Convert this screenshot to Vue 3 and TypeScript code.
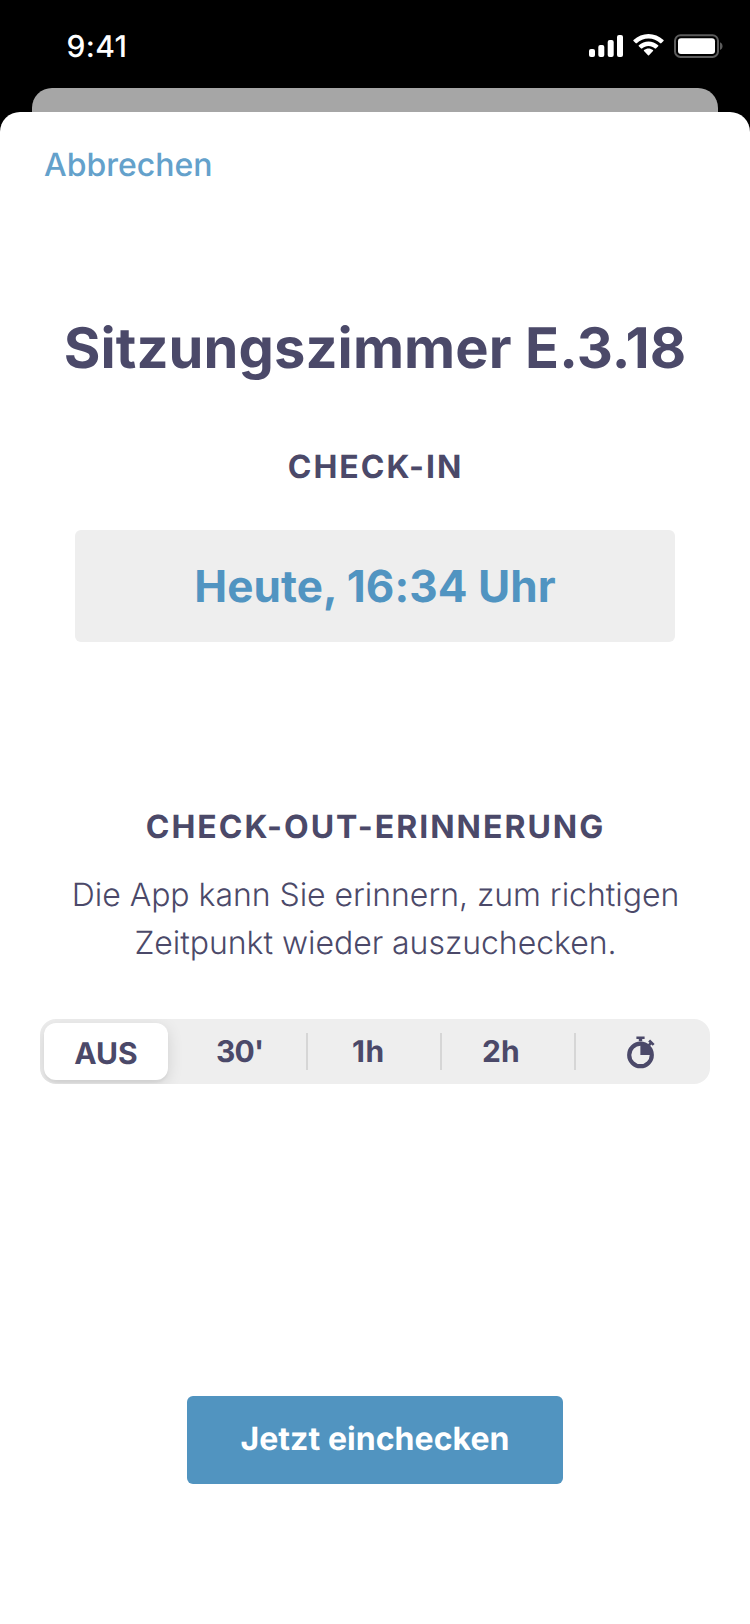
<script setup lang="ts">
import { ref } from 'vue'

interface Reminder {
  id: string
  label: string
}

const reminders: Reminder[] = [
  { id: 'off', label: 'AUS' },
  { id: 'half', label: "30'" },
  { id: 'one', label: '1h' },
  { id: 'two', label: '2h' },
  { id: 'custom', label: '' },
]
const selected = ref<string>('off')
</script>

<template>
  <div class="screen">
    <header class="status">
      <span class="time">9:41</span>
      <div class="indicators">
        <svg class="signal" width="34" height="22" viewBox="0 0 34 22" fill="#fff">
          <rect x="0" y="14" width="6" height="8" rx="2" />
          <rect x="9.3" y="10" width="6" height="12" rx="2" />
          <rect x="18.7" y="5" width="6" height="17" rx="2" />
          <rect x="28" y="0" width="6" height="22" rx="2" />
        </svg>
        <svg class="wifi" width="31" height="22" viewBox="0 0 31 22" fill="#fff">
          <path d="M15.5 4.6c4.4 0 8.6 1.7 11.8 4.7.3.2.6.2.9 0l2.3-2.3c.3-.3.3-.7 0-1C22.1-2 8.9-2 .5 6c-.3.3-.3.7 0 1l2.3 2.3c.3.2.6.2.9 0 3.2-3 7.4-4.7 11.8-4.7z" />
          <path d="M15.5 12.1c2.4 0 4.7.9 6.5 2.5.2.2.6.2.9 0l2.3-2.3c.3-.3.3-.7 0-1-5.5-5.100-13.900-5.100-19.400 0-.3.300-.3.700 0 1l2.300 2.300c.3.200.7.200.9 0 1.800-1.600 4.100-2.500 6.500-2.500z" />
          <path d="M20 17.100c.3-.3.300-.7 0-1-2.600-2.100-6.400-2.100-9 0-.3.300-.3.700 0 1l4 4.200c.3.300.7.300 1 0z" />
        </svg>
        <svg class="battery" width="50" height="24" viewBox="0 0 50 24">
          <rect x="1" y="1.3" width="43" height="21.6" rx="5.5" fill="none" stroke="#5c5c5c" stroke-width="2" />
          <rect x="4" y="4.3" width="37" height="15.6" rx="3" fill="#fff" />
          <path d="M46 8.200c3.400 1.400 3.400 6.400 0 7.800z" fill="#5c5c5c" />
        </svg>
      </div>
    </header>
    <div class="behind"></div>
    <main class="sheet">
      <button class="cancel" type="button">Abbrechen</button>
      <h1 class="room">Sitzungszimmer E.3.18</h1>
      <h2 class="heading">CHECK-IN</h2>
      <div class="when">Heute, 16:34 Uhr</div>
      <h2 class="heading reminder">CHECK-OUT-ERINNERUNG</h2>
      <p class="hint">Die App kann Sie erinnern, zum richtigen<br />Zeitpunkt wieder auszuchecken.</p>
      <div class="segments">
        <button
          v-for="item in reminders"
          :key="item.id"
          type="button"
          class="segment"
          :class="[item.id, { active: selected === item.id }]"
          @click="selected = item.id"
        >
          <span v-if="item.label">{{ item.label }}</span>
          <svg v-else class="timer" width="28" height="33" viewBox="0 0 28 33">
            <circle cx="13.5" cy="18.9" r="11.3" fill="none" stroke="#4b4969" stroke-width="4.2" />
            <path d="M13.4 8v11h11C24.4 13 19.5 8 13.4 8z" fill="#4b4969" />
            <path d="M9.4.5h8.2v2.6h-2.4v2.1h-3.4V3.1H9.4z" fill="#4b4969" />
            <path d="M21.2 5.4l1.9-1.9 4.5 4.5-1.9 1.8-1.3-1.2-1.8 1.8-1.9-1.9 1.8-1.8z" fill="#4b4969" />
          </svg>
        </button>
      </div>
      <button class="submit" type="button">Jetzt einchecken</button>
    </main>
  </div>
</template>

<style>
body {
  margin: 0;
  background: #000;
}
</style>

<style scoped>
.screen {
  box-sizing: border-box;
  width: 750px;
  height: 1624px;
  display: flex;
  flex-direction: column;
  overflow: hidden;
  background: #000;
  color: #4b4969;
  font-family: Inter, "Liberation Sans", sans-serif;
  text-rendering: geometricPrecision;
}
button {
  margin: 0;
  padding: 0;
  border: 0;
  background: none;
  font-family: inherit;
  color: inherit;
  text-rendering: inherit;
}
svg {
  display: block;
}
.status {
  box-sizing: border-box;
  height: 88px;
  padding: 34px 26px 0 66.5px;
  display: flex;
  justify-content: space-between;
  align-items: flex-start;
}
.time {
  color: #fff;
  font-size: 30px;
  font-weight: 500;
  line-height: 27px;
  letter-spacing: 0.4px;
}
.indicators {
  display: flex;
  gap: 10px;
}
.signal {
  margin-top: 1px;
}
.behind {
  height: 24px;
  flex: none;
  margin: 0 32px;
  border-radius: 20px 20px 0 0;
  background: #a6a6a6;
}
.sheet {
  flex: 1;
  display: flex;
  flex-direction: column;
  align-items: center;
  border-radius: 20px 20px 0 0;
  background: #fff;
}
.cancel {
  align-self: flex-start;
  margin: 33px 0 0 44px;
  font-size: 32px;
  font-weight: 500;
  line-height: 40px;
  color: #64a1cb;
}
.room {
  margin: 129px 0 0;
  font-size: 56px;
  font-weight: 700;
  line-height: 68px;
  letter-spacing: 0.1px;
  white-space: nowrap;
}
.heading {
  margin: 65px 0 0;
  padding-left: 1px;
  font-size: 32px;
  font-weight: 700;
  line-height: 40px;
  letter-spacing: 2px;
}
.when {
  width: 600px;
  margin-top: 43px;
  border-radius: 6px;
  background: #eee;
  color: #5194c1;
  font-size: 44px;
  font-weight: 700;
  line-height: 112px;
  letter-spacing: 0.05px;
  text-align: center;
}
.reminder {
  margin-top: 165px;
}
.hint {
  margin: 24px 0 0;
  padding-left: 1px;
  font-size: 32px;
  font-weight: 300;
  line-height: 48px;
  letter-spacing: -0.04px;
  text-align: center;
  white-space: nowrap;
}
.segments {
  box-sizing: border-box;
  width: 670px;
  height: 65px;
  margin-top: 52px;
  display: grid;
  grid-template-columns: 132px 134px 134px 134px 136px;
  overflow: hidden;
  border-radius: 16px;
  background: #eee;
}
.segment {
  display: flex;
  align-items: center;
  box-sizing: border-box;
  font-size: 30px;
  font-weight: 700;
  line-height: 36px;
}
.active {
  width: 124px;
  height: 57px;
  margin: 4px 0 0 4px;
  padding-top: 4px;
  justify-content: center;
  border-radius: 12px;
  background: #fff;
  box-shadow: 0 4px 16px rgba(0, 0, 0, 0.12), 0 3px 2px rgba(0, 0, 0, 0.04);
}
.half,
.one,
.two {
  height: 37px;
  margin-top: 14px;
  border-right: 2px solid #d6d6d6;
}
.half {
  padding-left: 44px;
  width: 136px;
  letter-spacing: -0.8px;
}
.one {
  padding-left: 46px;
  width: 136px;
  letter-spacing: 0.5px;
}
.two {
  padding-left: 42px;
  width: 136px;
}
.custom {
  padding: 1px 0 0 52.6px;
}
.submit {
  width: 376px;
  height: 88px;
  margin-top: 312px;
  padding-bottom: 3px;
  border-radius: 6px;
  background: #5194c0;
  color: #fff;
  font-size: 32px;
  font-weight: 700;
  letter-spacing: 0.05px;
}
</style>
